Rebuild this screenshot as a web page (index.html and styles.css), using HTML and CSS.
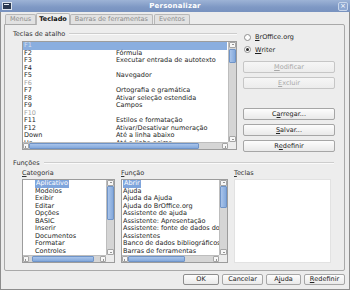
FILE: index.html
```html
<!DOCTYPE html>
<html lang="pt">
<head>
	<meta charset="UTF-8">
	<title>Personalizar</title>
	<link rel="stylesheet" href="styles.css">
</head>
<body>
	<div class="win">
		<div class="titlebar">
			<span class="appicon"></span>
			<span class="title">Personalizar</span>
			<span class="close">×</span>
		</div>
		<div class="tabs">
			<span class="tab">Menus</span>
			<span class="tab active">Teclado</span>
			<span class="tab">Barras de ferramentas</span>
			<span class="tab">Eventos</span>
		</div>
		<div class="panel">
			<div class="top">
				<div class="left">
					<div class="legend"><span>Teclas de atalho</span></div>
					<div class="list keys">
						<div class="rows">
							<div class="row sel dis"><span class="k">F1</span><span></span></div>
							<div class="row"><span class="k">F2</span><span>Fórmula</span></div>
							<div class="row"><span class="k">F3</span><span>Executar entrada de autotexto</span></div>
							<div class="row"><span class="k">F4</span><span></span></div>
							<div class="row"><span class="k">F5</span><span>Navegador</span></div>
							<div class="row dis"><span class="k">F6</span><span></span></div>
							<div class="row"><span class="k">F7</span><span>Ortografia e gramática</span></div>
							<div class="row"><span class="k">F8</span><span>Ativar seleção estendida</span></div>
							<div class="row"><span class="k">F9</span><span>Campos</span></div>
							<div class="row dis"><span class="k">F10</span><span></span></div>
							<div class="row"><span class="k">F11</span><span>Estilos e formatação</span></div>
							<div class="row"><span class="k">F12</span><span>Ativar/Desativar numeração</span></div>
							<div class="row"><span class="k">Down</span><span>Até a linha abaixo</span></div>
							<div class="row"><span class="k">Up</span><span>Até a linha acima</span></div>
						</div>
						<div class="vs">
							<span class="arr up"></span>
							<span class="thumb v1"></span>
							<span class="fill"></span>
							<span class="arr down"></span>
						</div>
						<div class="hs">
							<span class="arr lf"></span>
							<span class="thumb h1"></span>
							<span class="fill"></span>
							<span class="arr rt"></span>
						</div>
						<div class="corner"></div>
					</div>
				</div>
				<div class="right">
					<label class="radio"><span class="dotr"></span><u>B</u>rOffice.org</label>
					<label class="radio"><span class="dotr on"></span><u>W</u>riter</label>
					<span class="btn off first"><u>M</u>odificar</span>
					<span class="btn off"><u>E</u>xcluir</span>
					<span class="btn sep">C<u>a</u>rregar...</span>
					<span class="btn"><u>S</u>alvar...</span>
					<span class="btn">R<u>e</u>definir</span>
				</div>
			</div>
			<div class="legend wide"><span>Funções</span></div>
			<div class="funcs">
				<div class="col">
					<div class="cap"><u>C</u>ategoria</div>
					<div class="list small">
						<div class="rows ind">
							<div class="row"><span class="hl">Aplicativo</span></div>
							<div class="row">Modelos</div>
							<div class="row">Exibir</div>
							<div class="row">Editar</div>
							<div class="row">Opções</div>
							<div class="row">BASIC</div>
							<div class="row">Inserir</div>
							<div class="row">Documentos</div>
							<div class="row">Formatar</div>
							<div class="row">Controles</div>
						</div>
						<div class="vs">
							<span class="arr up"></span>
							<span class="thumb v2"></span>
							<span class="fill"></span>
							<span class="arr down"></span>
						</div>
						<div class="hs">
							<span class="arr lf"></span>
							<span class="thumb h2"></span>
							<span class="fill"></span>
							<span class="arr rt"></span>
						</div>
						<div class="corner"></div>
					</div>
				</div>
				<div class="col">
					<div class="cap"><u>F</u>unção</div>
					<div class="list small">
						<div class="rows">
							<div class="row"><span class="hl">Abrir</span></div>
							<div class="row">Ajuda</div>
							<div class="row">Ajuda da Ajuda</div>
							<div class="row">Ajuda do BrOffice.org</div>
							<div class="row">Assistente de ajuda</div>
							<div class="row">Assistente: Apresentação</div>
							<div class="row">Assistente: fonte de dados dos</div>
							<div class="row">Assistentes</div>
							<div class="row">Banco de dados bibliográficos</div>
							<div class="row">Barras de ferramentas</div>
						</div>
						<div class="vs">
							<span class="arr up"></span>
							<span class="thumb v3"></span>
							<span class="fill"></span>
							<span class="arr down"></span>
						</div>
						<div class="hs">
							<span class="arr lf"></span>
							<span class="thumb h3"></span>
							<span class="fill"></span>
							<span class="arr rt"></span>
						</div>
						<div class="corner"></div>
					</div>
				</div>
				<div class="col">
					<div class="cap"><u>T</u>eclas</div>
					<div class="blank"></div>
				</div>
			</div>
		</div>
		<div class="footer">
			<span class="btn ok">OK</span>
			<span class="btn w41">Cancelar</span>
			<span class="btn w35">A<u>j</u>uda</span>
			<span class="btn w41"><u>R</u>edefinir</span>
		</div>
	</div>
</body>
</html>
```

FILE: styles.css
```css
*{margin:0;padding:0;box-sizing:border-box;}
body{background:#ececec;font-family:"DejaVu Sans",sans-serif;font-size:6.5px;color:#1e1e1e;}
u{text-decoration:underline;text-underline-offset:1px;}

/*窗口*/
.win{width:350px;height:290px;border:1px solid #8d8d8d;border-top:none;background:#ececec;}
.titlebar{height:12px;display:flex;align-items:center;padding:0 2px 0 2px;background:linear-gradient(#9db3d6,#7e98c4 60%,#7892bf);margin:0 -1px;}
.appicon{width:10px;height:8px;background:#2c3a52;border:1px solid #dde4ee;position:relative;}
.appicon:after{content:"";position:absolute;left:1px;top:1px;width:5px;height:1px;background:#e8eef6;}
.title{flex:1;text-align:center;color:#fff;font-weight:bold;font-size:7px;letter-spacing:0.2px;}
.close{width:10px;height:9px;border:1px solid #c9d6ea;border-radius:2px;background:#8ea8d2;color:#fff;font-size:7px;line-height:7px;text-align:center;}

/*标签页*/
.tabs{height:12px;display:flex;align-items:flex-end;padding-left:4px;}
.tab{height:10px;line-height:9px;padding:0 4px;border:1px solid #b8b8b8;border-bottom:none;border-radius:2px 2px 0 0;background:#e2e2e2;color:#8c8c8c;margin-right:1px;}
.tab.active{height:12px;line-height:11px;font-weight:bold;color:#111;background:#ededed;position:relative;top:1px;padding:0 2px;margin:0 0 0 -1px;}
.panel{margin-left:3px;width:341px;height:247px;border:1px solid #a9a9a9;border-radius:0 2px 2px 2px;background:#ededed;padding:4px 8px 0 8px;}

/*分组标题*/
.legend{height:9px;display:flex;align-items:center;color:#333;}
.legend:after{content:"";flex:1;border-top:1px solid #cdcdcd;border-bottom:1px solid #fafafa;margin-left:4px;}
.legend.wide{margin-top:6px;margin-right:2px;}

.top{display:grid;grid-template-columns:224px 92px;column-gap:6px;}
.right{display:flex;flex-direction:column;padding-top:2px;}
.radio{height:12.5px;display:flex;align-items:center;padding-left:1px;}
.dotr{width:7px;height:7px;border-radius:50%;border:1px solid #8f8f8f;background:#fdfdfd;margin-right:4px;display:flex;align-items:center;justify-content:center;}
.dotr.on:after{content:"";width:3px;height:3px;border-radius:50%;background:#2a2a2a;}

/*按钮*/
.btn{height:12px;display:flex;align-items:center;justify-content:center;border:1px solid #a6a6a6;border-radius:2px;background:linear-gradient(#fdfdfd,#e9e9e9);color:#222;margin-top:4px;}
.btn.first{margin-top:4.5px;}
.btn.sep{margin-top:19.5px;}
.btn.off{color:#a8a8a8;border-color:#c6c6c6;background:linear-gradient(#f6f6f6,#ececec);}

/*列表*/
.list{display:grid;grid-template-columns:1fr 8px;grid-template-rows:1fr 7px;border:1px solid #9c9c9c;background:#fff;overflow:hidden;}
.keys{margin:3px 0 0 9px;height:109px;}
.rows{overflow:hidden;}
.row{height:7.5px;line-height:7.5px;white-space:nowrap;display:flex;}
.row .k{width:93px;padding-left:1px;}
.row.dis{color:#a3a3a3;}
.row.sel{background:#8aaedf;color:#d6e0ee;margin-right:1px;}
.funcs .rows .row{padding-left:1px;}
.funcs .rows.ind .row{padding-left:12px;}
.hl{background:#7fa5dc;color:#fff;padding:0 1px;}

/*滚动条*/
.vs{display:flex;flex-direction:column;background:#d5d5d5;border-left:1px solid #bdbdbd;}
.hs{display:flex;background:#d5d5d5;border-top:1px solid #bdbdbd;}
.corner{background:#ececec;}
.fill{flex:1;}
.arr{flex:none;width:7px;height:6px;background:#f7f7f7;border:1px solid #a5a5a5;border-radius:1px;position:relative;}
.hs .arr{width:6px;height:6px;}
.arr:after{content:"";position:absolute;left:1.5px;top:1.5px;border:1.5px solid transparent;}
.arr.up:after{border-bottom-color:#333;top:0;}
.arr.down:after{border-top-color:#333;top:1.5px;}
.arr.lf:after{border-right-color:#333;left:0;}
.arr.rt:after{border-left-color:#333;left:1.5px;}
.thumb{flex:none;background:linear-gradient(90deg,#a9c4ea,#84a9dc);border:1px solid #6f94c8;border-radius:1px;}
.hs .thumb{background:linear-gradient(#a9c4ea,#84a9dc);}
.v1{height:14px;margin-top:1px;}
.v2{height:34px;margin-top:0;}
.v3{height:22px;margin-top:0;}
.h1{width:170px;margin-left:0;}
.h2{width:62px;margin-left:3px;}
.h3{width:57px;margin-left:0;}

/*功能区*/
.funcs{display:grid;grid-template-columns:93px 107px 97px;column-gap:6px;margin-left:9px;}
.cap{height:8px;line-height:8px;margin-top:1.5px;color:#333;}
.small{height:84px;margin-top:2.5px;}
.blank{height:84px;margin-top:2.5px;background:#fff;border:1px solid #e2e2e2;}

/*底部按钮*/
.footer{display:flex;justify-content:flex-end;gap:3px;padding-right:4px;margin-top:3px;}
.footer .btn{flex:none;height:10.5px;margin-top:0;}
.footer .ok{width:36px;border-color:#8d8d8d;}
.footer .w41{width:41px;}
.footer .w35{width:35px;}
```
